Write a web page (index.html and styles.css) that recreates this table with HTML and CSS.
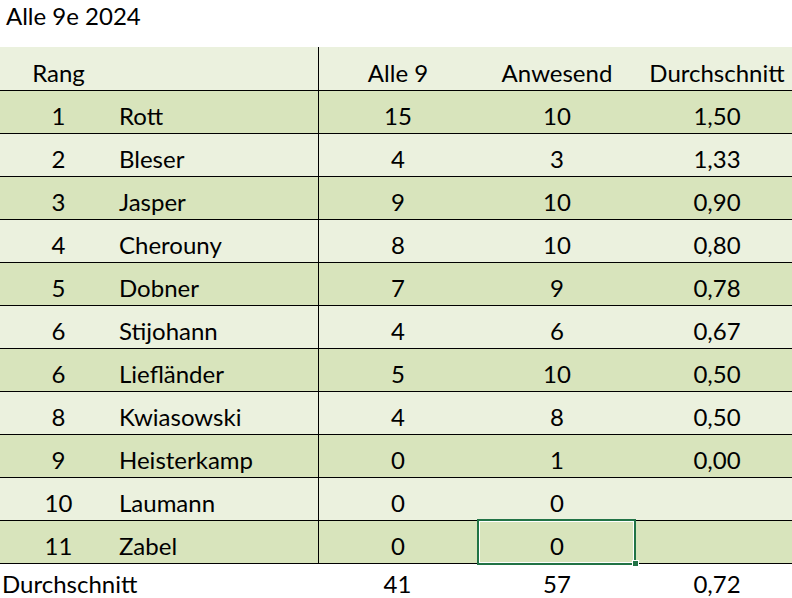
FILE: index.html
```html
<!DOCTYPE html>
<html lang="de">
<head>
<meta charset="utf-8">
<title>Alle 9e 2024</title>
<link rel="stylesheet" href="styles.css">
</head>
<body>
<div class="sheet">
  <div class="title">Alle 9e 2024</div>
  <div class="row head">
    <div class="cell c">Rang</div>
    <div class="cell l"></div>
    <div class="cell c sep">Alle 9</div>
    <div class="cell c">Anwesend</div>
    <div class="cell c">Durchschnitt</div>
  </div>
  <div class="row dark"><div class="cell c">1</div><div class="cell l">Rott</div><div class="cell c sep">15</div><div class="cell c">10</div><div class="cell c">1,50</div></div>
  <div class="row light"><div class="cell c">2</div><div class="cell l">Bleser</div><div class="cell c sep">4</div><div class="cell c">3</div><div class="cell c">1,33</div></div>
  <div class="row dark"><div class="cell c">3</div><div class="cell l">Jasper</div><div class="cell c sep">9</div><div class="cell c">10</div><div class="cell c">0,90</div></div>
  <div class="row light"><div class="cell c">4</div><div class="cell l">Cherouny</div><div class="cell c sep">8</div><div class="cell c">10</div><div class="cell c">0,80</div></div>
  <div class="row dark"><div class="cell c">5</div><div class="cell l">Dobner</div><div class="cell c sep">7</div><div class="cell c">9</div><div class="cell c">0,78</div></div>
  <div class="row light"><div class="cell c">6</div><div class="cell l">Stijohann</div><div class="cell c sep">4</div><div class="cell c">6</div><div class="cell c">0,67</div></div>
  <div class="row dark"><div class="cell c">6</div><div class="cell l">Liefländer</div><div class="cell c sep">5</div><div class="cell c">10</div><div class="cell c">0,50</div></div>
  <div class="row light"><div class="cell c">8</div><div class="cell l">Kwiasowski</div><div class="cell c sep">4</div><div class="cell c">8</div><div class="cell c">0,50</div></div>
  <div class="row dark"><div class="cell c">9</div><div class="cell l">Heisterkamp</div><div class="cell c sep">0</div><div class="cell c">1</div><div class="cell c">0,00</div></div>
  <div class="row light"><div class="cell c">10</div><div class="cell l">Laumann</div><div class="cell c sep">0</div><div class="cell c">0</div><div class="cell c"></div></div>
  <div class="row dark"><div class="cell c">11</div><div class="cell l">Zabel</div><div class="cell c sep">0</div><div class="cell c selected">0</div><div class="cell c"></div></div>
  <div class="row foot">
    <div class="cell label">Durchschnitt</div>
    <div class="cell l"></div>
    <div class="cell c">41</div>
    <div class="cell c">57</div>
    <div class="cell c">0,72</div>
  </div>
</div>
</body>
</html>
```
FILE: styles.css
```css
html, body {
  margin: 0;
  padding: 0;
  overflow: hidden;
  background: #ffffff;
}
.sheet {
  width: 797px;
  font-family: Lato, "Liberation Sans", sans-serif;
  font-size: 24px;
  line-height: 28px;
  color: #000000;
}
.title {
  height: 47px;
  box-sizing: border-box;
  padding: 2px 0 0 6px;
}
.row {
  display: grid;
  grid-template-columns: 117px 201px 159px 160px 160px;
  height: 43px;
  box-sizing: border-box;
  border-bottom: 1px solid #000000;
}
.row.head {
  height: 44px;
  background: #ebf1de;
}
.row.dark { background: #d8e4bc; }
.row.light { background: #ebf1de; }
.row.foot {
  height: 34px;
  border-bottom: none;
  background: #ffffff;
}
.cell {
  display: flex;
  align-items: flex-end;
  padding-bottom: 3px;
  white-space: nowrap;
  box-sizing: border-box;
}
.cell.c { justify-content: center; }
.cell.l { justify-content: flex-start; padding-left: 2px; }
.cell.sep { border-left: 1px solid #000000; }
.row.foot .cell {
  align-items: flex-start;
  padding-top: 6px;
  padding-bottom: 0;
}
.cell.label { padding-left: 2px; overflow: visible; }
.selected { position: relative; }
.selected::after {
  content: "";
  position: absolute;
  left: 0;
  right: 1px;
  top: -2px;
  bottom: -2px;
  border: 2px solid #217346;
  box-shadow: inset 0 0 0 1px #ffffff;
}
.selected::before {
  content: "";
  position: absolute;
  right: -2px;
  bottom: -4px;
  width: 5px;
  height: 5px;
  background: #217346;
  border: 1px solid #ffffff;
  z-index: 1;
}
```
